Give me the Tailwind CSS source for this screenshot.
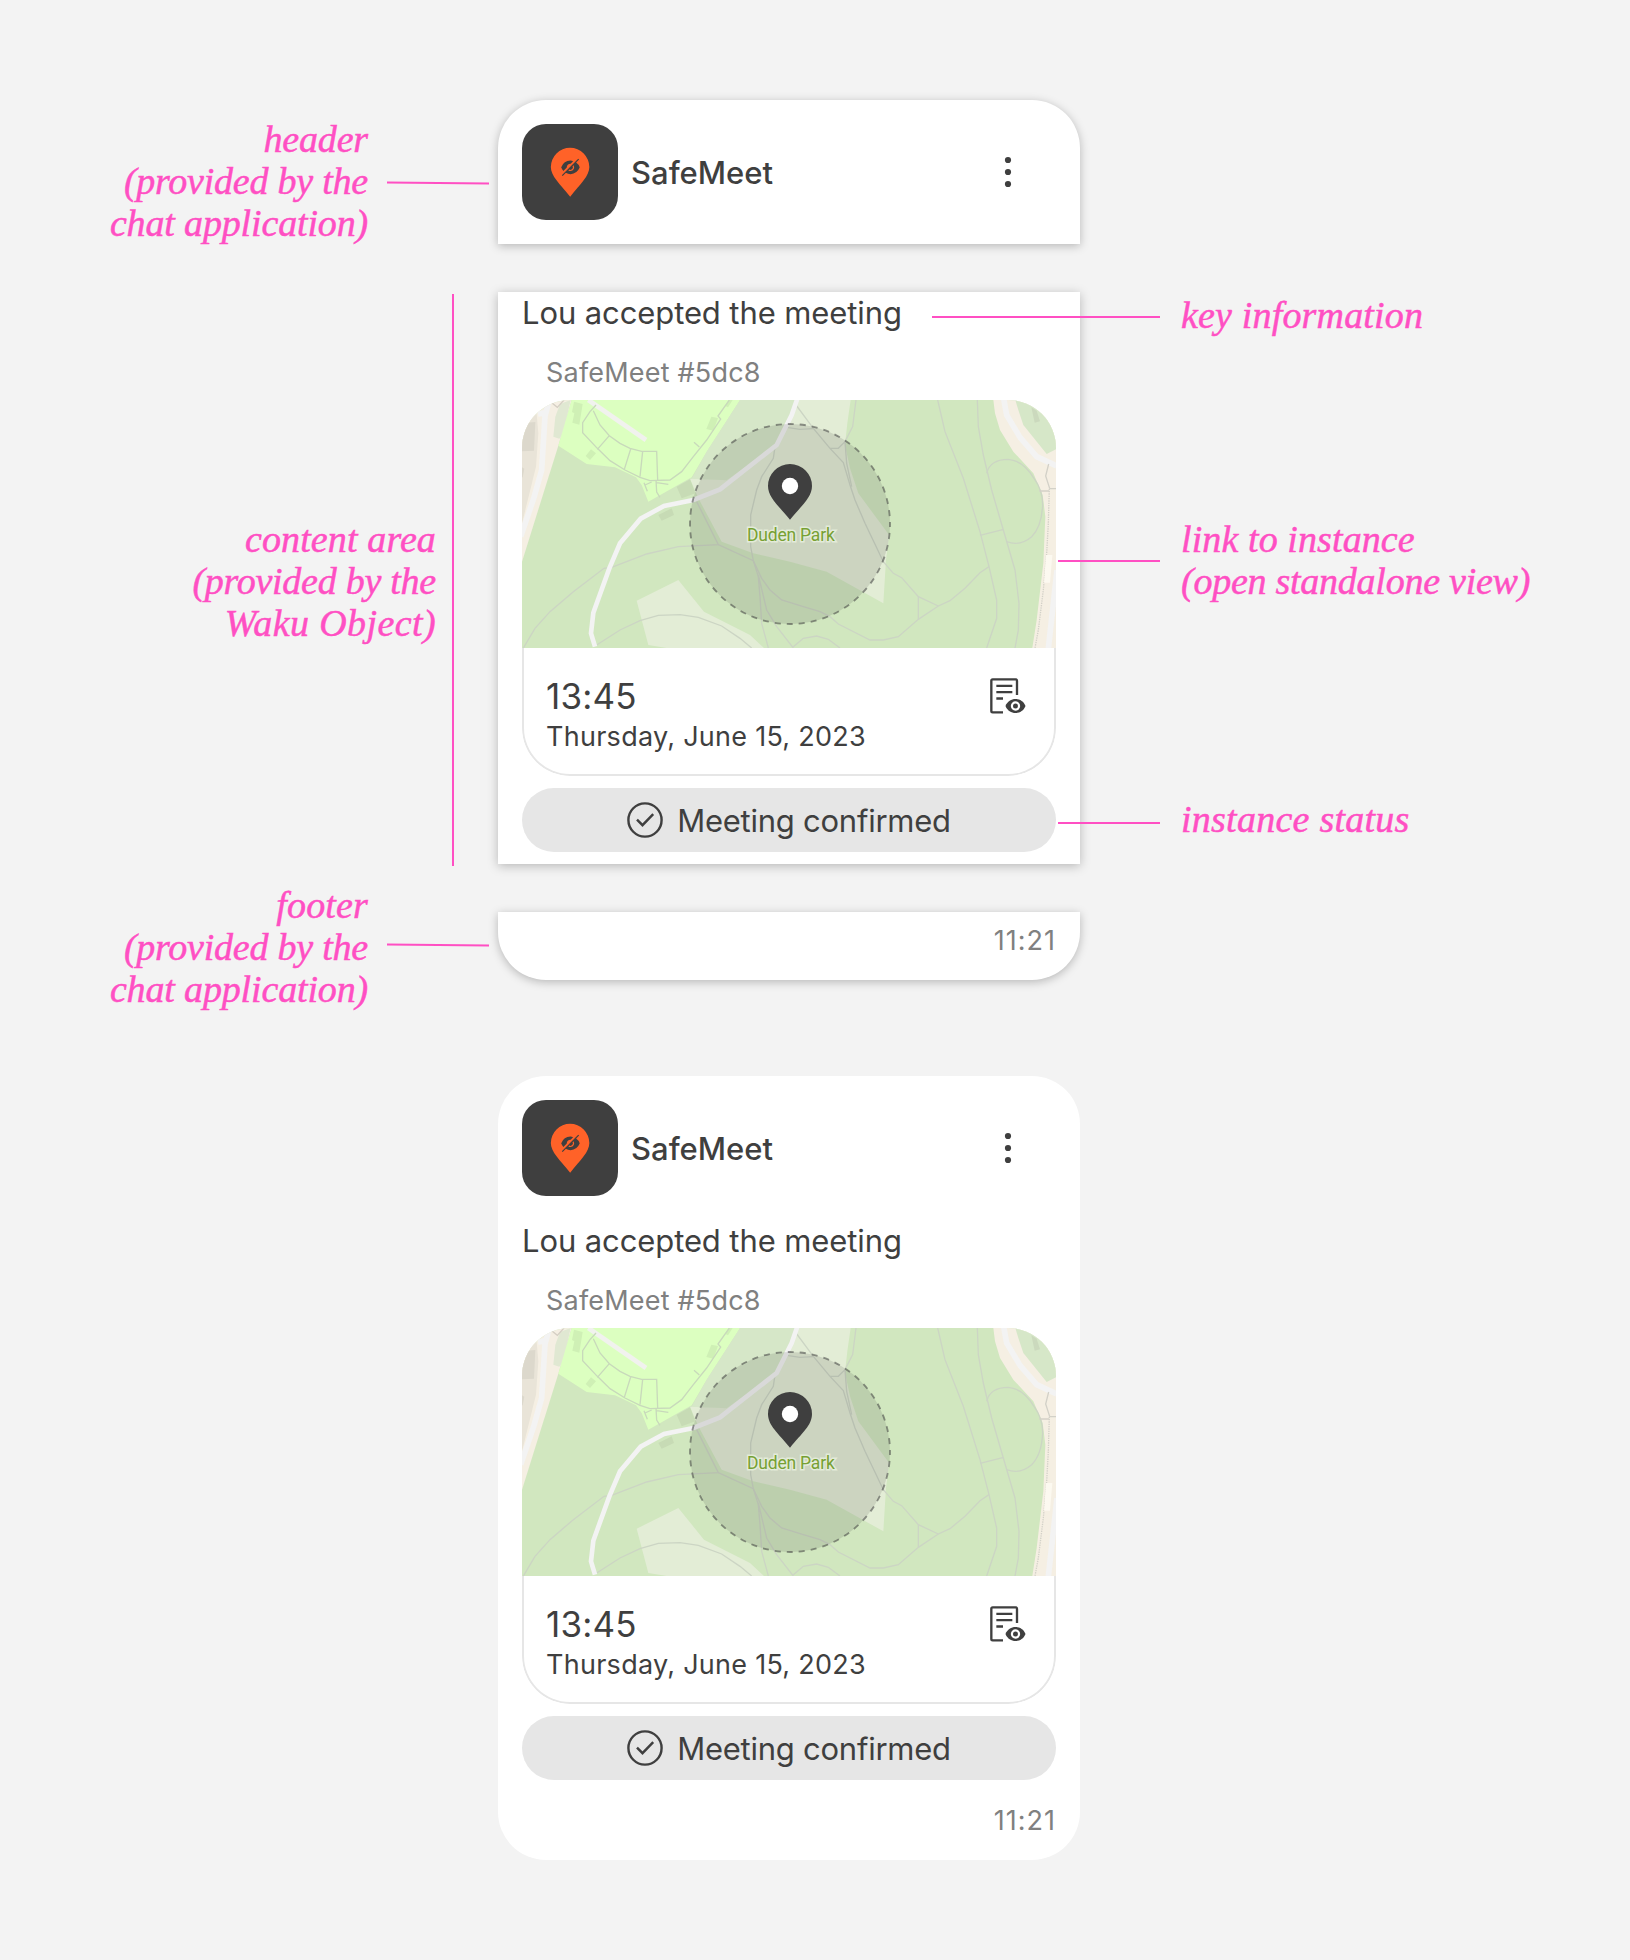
<!DOCTYPE html>
<html lang="en">
<head>
<meta charset="utf-8">
<title>SafeMeet message anatomy</title>
<script src="https://cdn.jsdelivr.net/npm/@tailwindcss/browser@4"></script>
</head>
<body class="bg-[#f3f3f3] font-['Inter',sans-serif] text-[#3f3f3f]">

<svg width="0" height="0" class="absolute">
  <symbol id="app" viewBox="36 42 288 288">
    <rect x="36" y="42" width="288" height="288" rx="72" fill="#3f3f3f"/>
    <path d="M122.500 171A57.500 57.500 0 0 1 238 171C238 198 212 221 180.500 260C149 221 122.500 198 122.500 171Z" fill="#ff6228"/>
    <g transform="translate(151.800 142.500) scale(1.850)" fill="#3f3f3f">
      <path d="M30.940 15.660A16.400 16.400 0 0 0 25.200 8.220L30 3.410 28.590 2 2 28.590 3.410 30l5.100-5.090A15.290 15.290 0 0 0 16 27 17.120 17.120 0 0 0 30.940 16.340a1 1 0 0 0 0-.68ZM16 22a6 6 0 0 1-3.420-1.080l1.450-1.450a4 4 0 0 0 5.440-5.440l1.450-1.450A6 6 0 0 1 16 22Z"/>
      <path d="M4.530 21.810l5.470-5.470A6 6 0 0 1 16.340 10l3.940-3.780A15 15 0 0 0 16 5 17.120 17.120 0 0 0 1.060 15.660a1 1 0 0 0 0 .68A16.240 16.240 0 0 0 4.530 21.810Z"/>
    </g>
  </symbol>
  <symbol id="dots" viewBox="0 0 32 32">
    <g fill="#3f3f3f"><circle cx="16" cy="4" r="3.100"/><circle cx="16" cy="16" r="3.100"/><circle cx="16" cy="28" r="3.100"/></g>
  </symbol>
  <symbol id="docview" viewBox="87 51 114 114">
    <g fill="none" stroke="#3f3f3f" stroke-width="7">
      <path d="M129 157H98Q94 157 94 153V62Q94 58 98 58H167Q171 58 171 62V105"/>
      <path d="M109 77.500H157M109 96.500H157M109 115.500H129"/>
    </g>
    <path d="M136.500 138C147 110 186 110 196.500 138C186 166 147 166 136.500 138Z" fill="#3f3f3f"/>
    <circle cx="166.500" cy="138" r="14" fill="#fff"/><circle cx="166.500" cy="138" r="7.500" fill="#3f3f3f"/>
  </symbol>
  <symbol id="check" viewBox="0 0 36 36">
    <g fill="none" stroke="#3f3f3f" stroke-width="2.400"><circle cx="18" cy="18" r="16.600"/><path d="M10 17.600L15.500 23.200L26.200 12.200"/></g>
  </symbol>
  <symbol id="map" viewBox="36 30 1602 744">
    <rect x="36" y="30" width="1602" height="744" fill="#d1e7bf"/>
    <path d="M36 30H185L145 167L36 515Z" fill="#f5efe3"/>
    <path d="M36 90L80 72L85 130L78 230L36 400Z" fill="#e9e4d8"/>
    <path d="M50 98L76 96L72 182L36 184V110Z" fill="#dcd8cc"/><path d="M36 232L43 236L38 262H36Z" fill="#dcd8cc"/>
    <path d="M150 42L182 30L160 130L148 146L130 140L136 80Z" fill="#e0e8d2"/>
    <path d="M118 30L105 78L95 240L72 322L32 440M108 68L84 72" fill="none" stroke="#f3f3f3" stroke-width="17"/>
    <path d="M125 38L142 52L162 30" fill="none" stroke="#d5cfc4" stroke-width="4"/>
    <path d="M185 30H690L590 185L545 262L415 335L395 285L378 262L315 232L230 222L145 167Z" fill="#dcffc0"/>
    <path d="M690 30H860L840 70L800 165L650 272L545 266L590 185Z" fill="#d6e7c8"/>
    <path d="M540 266L650 271L800 165L862 30H1022L1012 100L1005 165L1020 235L1045 310L1138 436L1128 510L1120 640L1058 605L950 545L840 515L730 490L635 455L565 325Z" fill="#e3edd6"/>
    <path d="M505 570L582 665L720 735L762 774H470L415 765L380 632Z" fill="#e3edd6"/>
    <g fill="#cff0b5"><path d="M192 35L218 42L208 104L187 98L193 70L186 66Z"/><path d="M243 178L258 190L240 210L227 198Z"/><path d="M604 80L624 84L610 122L589 117Z"/><path d="M656 30H668L654 52L646 48Z"/></g>
    <path d="M500 290L540 268L556 310L515 325ZM445 375L485 355L492 375L455 392Z" fill="#c7dbb5"/>
    <path d="M235 30L408 150" stroke="#f1f2ee" stroke-width="14"/>
    <g fill="none" stroke="#c8d9bb" stroke-width="4">
      <path d="M258 45L240 65L218 98V128L262 175L300 212L345 240L390 262L420 272L480 270L515 245L550 200L590 150L632 87L624 78L658 30"/>
      <path d="M250 62L270 105L298 137L330 160L360 175L395 184H440L443 270M298 137L262 178M362 177L343 238M398 184L390 260M438 270L440 306L450 322M552 157L568 171M402 278L412 304M405 285L425 276M440 278L475 283"/>
    </g>
    <g fill="none" stroke="#ccd5c4" stroke-width="4">
      <path d="M40 774L75 715L120 665L190 605L282 535L305 532L410 492L505 470L625 464L560 335"/>
      <path d="M260 765L330 720L390 692L445 676L510 674L565 682L635 708L690 745L725 774"/>
      <path d="M625 464L730 512L755 565L780 600L815 630L880 650L930 665L960 680L985 702L1080 750H1120L1165 740L1225 688L1285 648L1320 632L1365 595L1410 548L1437 530"/>
      <path d="M795 170L790 205L755 260L740 300L722 375V470L730 512L745 560L750 620L755 700L775 774M745 555L770 660L800 710L850 774"/>
      <path d="M850 770L880 745L920 738L955 748L990 774"/>
      <path d="M858 45L910 115L960 175L1000 218L1020 285L1035 330L1065 400L1120 515L1150 550L1175 563L1225 620L1285 648M1225 620V688"/>
      <path d="M830 112L870 118L910 116M960 175H985L1005 155L1028 110L1038 30M1005 155L1010 220L1025 290"/>
      <path d="M1283 30L1305 125L1360 265L1410 425L1437 530L1460 630V685L1430 774"/>
      <path d="M1402 30L1405 110L1420 195L1445 300L1480 420L1515 540L1527 640L1525 720L1515 774M1410 436L1478 419"/>
    </g>
    <path d="M862 26L845 75L800 165L630 298L550 330L462 348L392 386L330 460L298 535L250 668L243 730L255 770" fill="none" stroke="#f3f3f3" stroke-width="14"/>
    <path d="M1450 30H1638V774H1567L1580 690L1600 520L1606 380L1598 315L1570 250L1510 185L1470 120L1455 70Z" fill="#f5efe3"/>
    <path d="M1516 30H1638V178L1610 192L1540 105L1525 60Z" fill="#d6e7c8"/>
    <path d="M1564 52L1580 62L1590 94L1574 98Z" fill="#cbd9bd"/>
    <path d="M1430 250Q1440 208 1495 208Q1540 212 1572 265Q1598 300 1598 345Q1595 410 1565 440Q1530 470 1490 455" fill="none" stroke="#ccd5c4" stroke-width="4"/>
    <path d="M1481 26L1490 75L1530 142L1580 200L1640 228M1641 540L1630 640L1615 776" fill="none" stroke="#f3f3f3" stroke-width="17"/>
    <g fill="none" stroke="#d3d1c8" stroke-width="4"><path d="M1616 222L1607 258L1619 295M1588 303H1618M1618 296H1638"/><path d="M1618 296L1615 400L1610 490L1600 600L1585 720L1575 774" stroke-dasharray="4 3"/></g>
    <path d="M1608 495H1627L1620 578H1602Z" fill="#fcf9f0"/>
    <circle cx="840" cy="402" r="300" fill="#3f3f3f" fill-opacity=".14"/>
    <circle cx="840" cy="402" r="300" fill="none" stroke="#3f3f3f" stroke-opacity=".55" stroke-width="5.500" stroke-dasharray="18.125 18.125" stroke-dashoffset="9"/>
    <path d="M774 288A66 66 0 0 1 906 288C906 322 876 345 840 389C804 345 774 322 774 288Z" fill="#3f3f3f"/>
    <circle cx="840" cy="288" r="24.500" fill="#fff"/>
  </symbol>
</svg>

<main class="relative grid h-[1960px] w-[1630px] grid-cols-[498px_582px_1fr] items-start">

  <!-- left annotations -->
  <aside class="pt-[118px] text-right font-['Liberation_Serif',serif] text-[38px] leading-[42px] whitespace-nowrap text-[#ff4fc3] italic [-webkit-text-stroke:0.5px_#ff4fc3]">
    <div class="flex gap-[19px] pr-[9px]">
      <p class="flex-1 tracking-[-0.15px]">header<br><span class="tracking-[-0.22px]">(provided by the</span><br>chat application)</p>
      <svg width="102" height="6" class="mt-[62px]"><path d="M0 2.500L102 3.500" stroke="#ff4fc3" stroke-width="2"/></svg>
    </div>
    <div class="mt-[50px] mr-[44px] h-[572px] border-r-2 border-[#ff4fc3] pt-[224px] pr-[16px]">
      <p><span class="tracking-[0.12px]">content area</span><br><span class="tracking-[-0.25px]">(provided by the</span><br><span class="tracking-[0.4px]">Waku Object)</span></p>
    </div>
    <div class="mt-[18px] flex gap-[19px] pr-[9px]">
      <p class="flex-1 tracking-[-0.15px]"><span class="tracking-[0.15px]">footer</span><br><span class="tracking-[-0.22px]">(provided by the</span><br>chat application)</p>
      <svg width="102" height="6" class="mt-[58px]"><path d="M0 2.500L102 3.500" stroke="#ff4fc3" stroke-width="2"/></svg>
    </div>
  </aside>

  <!-- cards -->
  <div class="pt-[100px]">
    <section class="flex h-[144px] items-center rounded-t-[48px] bg-white px-6 shadow-[0_2px_10px_rgba(0,0,0,0.25)]">
      <svg class="size-24"><use href="#app"/></svg>
      <h2 class="ml-[13px] flex-1 pt-0.5 text-[31px] font-medium">SafeMeet</h2>
      <svg class="mr-8 size-8"><use href="#dots"/></svg>
    </section>

    <section class="mt-12 h-[572px] bg-white px-6 shadow-[0_2px_10px_rgba(0,0,0,0.25)]">
      <p class="pt-px text-[31px] leading-10 tracking-[-0.1px]">Lou accepted the meeting</p>
      <p class="mt-[22px] pl-6 text-[27px] leading-9 tracking-[0.2px] text-[#808080]">SafeMeet #5dc8</p>
      <article class="mt-[9px] h-[376px] overflow-hidden rounded-[48px]">
        <div class="relative">
          <svg class="block h-[248px] w-[534px]"><use href="#map"/></svg>
          <span class="absolute top-[125px] left-[225px] font-['Roboto',sans-serif] text-[17.5px] leading-5 tracking-[-0.2px] whitespace-nowrap text-[#77a033] [paint-order:stroke] [-webkit-text-stroke:3px_#e3ebd9]">Duden Park</span>
        </div>
        <div class="flex h-[128px] justify-between rounded-b-[48px] border-x-2 border-b-2 border-[#e6e6e6] pt-[25px] pr-[27px] pl-[22px]">
          <div>
            <p class="text-[35px] leading-[46px] tracking-[0.2px]">13:45</p>
            <p class="text-[27px] leading-9 tracking-[0.27px]">Thursday, June 15, 2023</p>
          </div>
          <svg class="mt-1 size-[38px]"><use href="#docview"/></svg>
        </div>
      </article>
      <div class="mt-3 flex h-16 items-center justify-center gap-[14px] rounded-full bg-[#e6e6e6]">
        <svg class="size-9"><use href="#check"/></svg>
        <span class="pt-0.5 text-[31px] leading-10 tracking-[-0.25px]">Meeting confirmed</span>
      </div>
    </section>

    <section class="mt-12 h-[68px] rounded-b-[48px] bg-white px-6 pt-[11px] text-right shadow-[0_2px_10px_rgba(0,0,0,0.25)]">
      <time class="block text-[27px] leading-9 tracking-[1px] text-[#808080]">11:21</time>
    </section>

    <section class="mt-24 h-[784px] rounded-[48px] bg-white px-6">
      <div class="flex h-[144px] items-center">
        <svg class="size-24"><use href="#app"/></svg>
        <h2 class="ml-[13px] flex-1 pt-0.5 text-[31px] font-medium">SafeMeet</h2>
        <svg class="mr-8 size-8"><use href="#dots"/></svg>
      </div>
      <p class="pt-px text-[31px] leading-10 tracking-[-0.1px]">Lou accepted the meeting</p>
      <p class="mt-[22px] pl-6 text-[27px] leading-9 tracking-[0.2px] text-[#808080]">SafeMeet #5dc8</p>
      <article class="mt-[9px] h-[376px] overflow-hidden rounded-[48px]">
        <div class="relative">
          <svg class="block h-[248px] w-[534px]"><use href="#map"/></svg>
          <span class="absolute top-[125px] left-[225px] font-['Roboto',sans-serif] text-[17.5px] leading-5 tracking-[-0.2px] whitespace-nowrap text-[#77a033] [paint-order:stroke] [-webkit-text-stroke:3px_#e3ebd9]">Duden Park</span>
        </div>
        <div class="flex h-[128px] justify-between rounded-b-[48px] border-x-2 border-b-2 border-[#e6e6e6] pt-[25px] pr-[27px] pl-[22px]">
          <div>
            <p class="text-[35px] leading-[46px] tracking-[0.2px]">13:45</p>
            <p class="text-[27px] leading-9 tracking-[0.27px]">Thursday, June 15, 2023</p>
          </div>
          <svg class="mt-1 size-[38px]"><use href="#docview"/></svg>
        </div>
      </article>
      <div class="mt-3 flex h-16 items-center justify-center gap-[14px] rounded-full bg-[#e6e6e6]">
        <svg class="size-9"><use href="#check"/></svg>
        <span class="pt-0.5 text-[31px] leading-10 tracking-[-0.25px]">Meeting confirmed</span>
      </div>
      <time class="mt-[23px] block text-right text-[27px] leading-9 tracking-[1px] text-[#808080]">11:21</time>
    </section>
  </div>

  <!-- right annotations -->
  <aside class="pt-[294px] pl-[101px] font-['Liberation_Serif',serif] text-[38px] leading-[42px] whitespace-nowrap text-[#ff4fc3] italic [-webkit-text-stroke:0.5px_#ff4fc3]">
    <p class="tracking-[0.17px]">key information</p>
    <p class="mt-[182px]"><span class="tracking-[0.1px]">link to instance</span><br><span class="tracking-[-0.25px]">(open standalone view)</span></p>
    <p class="mt-[196px] tracking-[0.25px]">instance status</p>
  </aside>

  <!-- leader lines that run over the cards -->
  <div class="absolute top-[316px] left-[932px] h-0.5 w-[228px] bg-[#ff4fc3]"></div>
  <div class="absolute top-[560px] left-[1058px] h-0.5 w-[102px] bg-[#ff4fc3]"></div>
  <div class="absolute top-[822px] left-[1058px] h-0.5 w-[102px] bg-[#ff4fc3]"></div>
</main>
</body>
</html>
